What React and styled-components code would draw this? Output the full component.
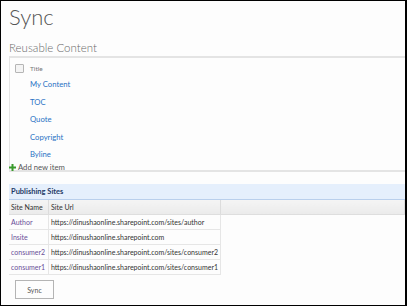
import React from 'react'
import styled, { createGlobalStyle } from 'styled-components'

const Global = createGlobalStyle`
    html, body {
        margin: 0;
        padding: 0;
        background: #fff;
    }
    body {
        font-family: Lato, "Open Sans", sans-serif;
    }
`
const Frame = styled.div`
    width: 407px;
    height: 306px;
    box-sizing: border-box;
    border: 1px solid #000;
    border-right-width: 2px;
    background: #fdfdfd;
    padding-left: 8px;
    overflow: hidden;
`
const PageTitle = styled.h1`
    margin: 0;
    padding-top: 1px;
    font-size: 22px;
    line-height: 30px;
    font-weight: 300;
    color: #555;
`
const SectionTitle = styled.h2`
    margin: 0;
    padding-top: 7px;
    font-size: 11.5px;
    line-height: 17px;
    font-weight: 300;
    color: #6a6a6a;
`
const ListBox = styled.div`
    height: 116px;
    box-sizing: border-box;
    border: 1px solid #e4e4e4;
    border-top-width: 2px;
    border-bottom-width: 2px;
    border-right: none;
    display: flex;
    flex-direction: column;
`
const ListHead = styled.div`
    display: flex;
    align-items: center;
    height: 14px;
    margin-top: 3px;
    padding-left: 5px;
    gap: 6px;
    font-size: 6.5px;
    color: #777;
`
const Check = styled.span`
    width: 7px;
    height: 7px;
    border: 1px solid #b5b5b5;
    background: #f4f4f4;
    border-radius: 1px;
`
const Item = styled.a`
    display: block;
    height: 17.6px;
    line-height: 18px;
    padding-left: 20px;
    font-size: 7.7px;
    color: #2a72c4;
    text-decoration: none;
`
const AddRow = styled.div`
    margin-top: auto;
    margin-bottom: -1px;
    display: flex;
    align-items: center;
    gap: 2px;
    height: 8px;
    font-size: 7.7px;
    color: #555;
    margin-left: -1px;
`
const Plus = styled.svg`
    width: 7px;
    height: 7px;
`
const Panel = styled.div`
    margin-top: 12px;
`
const PanelHead = styled.div`
    height: 15px;
    line-height: 15px;
    padding-left: 2px;
    background: #e5effc;
    border-bottom: 1px solid #b9cfec;
    font-size: 7.5px;
    font-weight: 700;
    color: #1f3a66;
`
const Table = styled.table`
    width: 100%;
    border-collapse: collapse;
    font-size: 7px;
`
const Th = styled.th`
    height: 14px;
    padding: 0 2px;
    text-align: left;
    font-weight: 400;
    color: #333;
    background: linear-gradient(#f4f4f4, #ebebeb);
    border-right: 1px solid #dcdcdc;
    border-bottom: 1px solid #dedede;
    white-space: nowrap;
`
const Td = styled.td`
    height: 14px;
    padding: 0 2px;
    border: 1px solid #e6e6e6;
    border-left: none;
    white-space: nowrap;
    color: ${p => (p.$link ? '#6a4f98' : '#333')};
`
const Filler = styled.td`
    border: none;
`
const ButtonRow = styled.div`
    padding: 5px 0 0 6px;
`
const Button = styled.button`
    display: block;
    width: 39px;
    height: 19px;
    border: 1px solid #b4b4b4;
    background: #fdfdfd;
    font-family: inherit;
    font-size: 7px;
    color: #555;
    padding: 0;
`

const items = ['My Content', 'TOC', 'Quote', 'Copyright', 'Byline']
const sites = [
    ['Author', 'https://dinushaonline.sharepoint.com/sites/author'],
    ['Insite', 'https://dinushaonline.sharepoint.com'],
    ['consumer2', 'https://dinushaonline.sharepoint.com/sites/consumer2'],
    ['consumer1', 'https://dinushaonline.sharepoint.com/sites/consumer1'],
]

const App = () => (
    <>
        <Global />
        <Frame>
            <PageTitle>Sync</PageTitle>
            <SectionTitle>Reusable Content</SectionTitle>
            <ListBox>
                <ListHead>
                    <Check />
                    <span>Title</span>
                </ListHead>
                {items.map(i => (
                    <Item key={i}>{i}</Item>
                ))}
                <AddRow>
                    <Plus viewBox="0 0 7 7">
                        <path d="M2.5 0h2v2.5H7v2H4.5V7h-2V4.5H0v-2h2.5z" fill="#3a9a2c" />
                    </Plus>
                    <span>Add new item</span>
                </AddRow>
            </ListBox>
            <Panel>
                <PanelHead>Publishing Sites</PanelHead>
                <Table>
                    <thead>
                        <tr>
                            <Th style={{ width: 35 }}>Site Name</Th>
                            <Th style={{ width: 166 }}>Site Url</Th>
                            <Th />
                        </tr>
                    </thead>
                    <tbody>
                        {sites.map(([name, url]) => (
                            <tr key={name}>
                                <Td $link>{name}</Td>
                                <Td>{url}</Td>
                                <Filler />
                            </tr>
                        ))}
                    </tbody>
                </Table>
            </Panel>
            <ButtonRow>
                <Button>Sync</Button>
            </ButtonRow>
        </Frame>
    </>
)
export default App
